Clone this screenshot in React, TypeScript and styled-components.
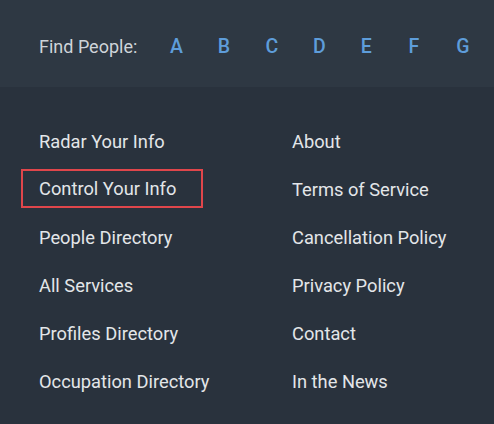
import styled, { createGlobalStyle } from "styled-components"

const Global = createGlobalStyle`
  html, body {
    margin: 0;
    padding: 0;
    background: #29323d;
  }
  body {
    font-family: Roboto, "Liberation Sans", sans-serif;
  }
`

const letters = ["A", "B", "C", "D", "E", "F", "G"]

const left = [
  "Radar Your Info",
  "Control Your Info",
  "People Directory",
  "All Services",
  "Profiles Directory",
  "Occupation Directory",
]

const right = [
  "About",
  "Terms of Service",
  "Cancellation Policy",
  "Privacy Policy",
  "Contact",
  "In the News",
]

const App = () => {
  return (
    <Page>
      <Global />
      <TopBar>
        <Label>Find People:</Label>
        <Letters>
          {letters.map((l) => (
            <Letter key={l}>{l}</Letter>
          ))}
        </Letters>
      </TopBar>
      <Links>
        <Column>
          {left.map((t, i) => (
            <LinkItem key={t} $boxed={i === 1}>
              {t}
            </LinkItem>
          ))}
        </Column>
        <Column>
          {right.map((t) => (
            <LinkItem key={t}>{t}</LinkItem>
          ))}
        </Column>
      </Links>
    </Page>
  )
}
export default App

const Page = styled.div`
  width: 494px;
  height: 424px;
  background: #29323d;
  overflow: hidden;
`

const TopBar = styled.div`
  height: 87px;
  background: #2e3843;
  display: flex;
  align-items: center;
  padding-left: 39px;
  padding-top: 5px;
  box-sizing: border-box;
`

const Label = styled.span`
  flex-shrink: 0;
  font-size: 18px;
  color: #cfd4d9;
  width: 131px;
`

const Letters = styled.div`
  display: flex;
`

const Letter = styled.a`
  flex-shrink: 0;
  width: 47.7px;
  font-size: 19.5px;
  font-weight: 500;
  color: #5e9dda;
  cursor: pointer;
`

const Links = styled.div`
  display: flex;
  padding: 30px 0 0 39px;
`

const Column = styled.div`
  flex-shrink: 0;
  width: 253px;
  display: flex;
  flex-direction: column;
`

const LinkItem = styled.a<{ $boxed?: boolean }>`
  box-sizing: border-box;
  height: 48px;
  display: flex;
  align-items: center;
  font-size: 18.3px;
  color: #e3e6e9;
  cursor: pointer;
  ${(p) =>
    p.$boxed &&
    `
    align-self: flex-start;
    height: 39px;
    margin: 4px 0 5px -18px;
    padding: 0 25px 0 16px;
    border: 2px solid #e0464b;
  `}
`
